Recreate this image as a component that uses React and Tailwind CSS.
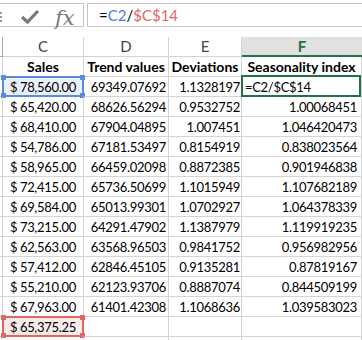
import React from "react";

const rows = [
  ["78,560.00", "69349.07692", "1.1328197", "=C2/$C$14"],
  ["65,420.00", "68626.56294", "0.9532752", "1.00068451"],
  ["68,410.00", "67904.04895", "1.007451", "1.046420473"],
  ["54,786.00", "67181.53497", "0.8154919", "0.838023564"],
  ["58,965.00", "66459.02098", "0.8872385", "0.901946838"],
  ["72,415.00", "65736.50699", "1.1015949", "1.107682189"],
  ["69,584.00", "65013.99301", "1.0702927", "1.064378339"],
  ["73,215.00", "64291.47902", "1.1387979", "1.119919235"],
  ["62,563.00", "63568.96503", "0.9841752", "0.956982956"],
  ["57,412.00", "62846.45105", "0.9135281", "0.87819167"],
  ["55,210.00", "62123.93706", "0.8887074", "0.844509199"],
  ["67,963.00", "61401.42308", "1.1068636", "1.039583023"],
];

const cell = "h-5 shrink-0 border-r border-b border-[#d4d4d4] relative";

const Handles = ({ color }) => (
  <>
    <span className={`absolute -left-[3px] -top-[3px] w-[5px] h-[5px] ${color}`} />
    <span className={`absolute -right-[3px] -top-[3px] w-[5px] h-[5px] ${color}`} />
    <span className={`absolute -left-[3px] -bottom-[3px] w-[5px] h-[5px] ${color}`} />
    <span className={`absolute -right-[3px] -bottom-[3px] w-[5px] h-[5px] ${color}`} />
  </>
);

const Money = ({ value }) => (
  <div className="flex justify-between items-center h-full pl-[7px] pr-[7px]">
    <span>$</span>
    <span>{value}</span>
  </div>
);

export default function App() {
  return (
    <div
      className="w-[362px] h-[340px] overflow-hidden bg-white text-black"
      style={{ fontFamily: "Lato, 'Liberation Sans', sans-serif" }}
    >
      {/* formula bar */}
      <div className="flex h-[37px] pt-[3px]">
        <div className="relative flex items-center h-[24px] w-[84px] shrink-0 border border-l-0 border-[#c6c6c6]">
          <span className="absolute left-0 top-[8px] flex flex-col gap-[2px]">
            <span className="w-[2px] h-[2px] bg-[#999]" />
            <span className="w-[2px] h-[2px] bg-[#999]" />
            <span className="w-[2px] h-[2px] bg-[#999]" />
          </span>
          <svg className="absolute left-[20px] top-[5px]" width="20" height="15" viewBox="0 0 20 15">
            <path d="M2 8 L7.5 13 L18 2" fill="none" stroke="#7a7a7a" strokeWidth="3.2" />
          </svg>
          <span
            className="absolute left-[55px] top-[-1px] text-[21px] italic text-[#7a7a7a]"
            style={{ fontFamily: "'DejaVu Serif', serif" }}
          >
            fx
          </span>
        </div>
        <div className="ml-[3px] flex items-center h-[24px] flex-1 border border-r-0 border-[#c6c6c6] pl-[11px] text-[15px]">
          <span>=</span>
          <span className="text-[#4a7fd6]">C2</span>
          <span>/</span>
          <span className="text-[#e46464]">$C$14</span>
        </div>
      </div>

      {/* column headers */}
      <div className="flex h-5 text-[15px] text-[#444]">
        <div className="w-[3px] shrink-0 border-r border-b border-[#ababab]" />
        <div className="w-[81px] shrink-0 flex items-center justify-center border-r border-b border-[#d4d4d4]">C</div>
        <div className="w-[85px] shrink-0 flex items-center justify-center border-r border-b border-[#d4d4d4]">D</div>
        <div className="w-[73px] shrink-0 flex items-center justify-center border-r border-b border-[#d4d4d4]">E</div>
        <div className="w-[120px] shrink-0 flex items-center justify-center bg-[#e1e1e1] border-b-2 border-[#217346] text-[#217346] font-bold">F</div>
      </div>

      {/* grid */}
      <div className="text-[13px] leading-5 tracking-[-0.3px]">
        <div className="flex font-bold text-[14px] tracking-normal">
          <div className={`${cell} w-[3px]`} />
          <div className={`${cell} w-[81px] text-center`}>Sales</div>
          <div className={`${cell} w-[85px] text-center`}>Trend values</div>
          <div className={`${cell} w-[73px] text-center`}>Deviations</div>
          <div className={`${cell} w-[120px] text-center whitespace-nowrap`}>Seasonality index</div>
        </div>

        {rows.map((r, i) => (
          <div key={i} className="flex">
            <div className={`${cell} w-[3px]`} />
            <div className={`${cell} w-[81px] ${i === 0 ? "bg-[#eaf1fb]" : ""}`}>
              <Money value={r[0]} />
              {i === 0 && (
                <div className="absolute -left-px -top-px -right-px -bottom-px border-2 border-[#5b8bd9]">
                  <Handles color="bg-[#5b8bd9]" />
                </div>
              )}
            </div>
            <div className={`${cell} w-[85px] text-right pr-[2px]`}>{r[1]}</div>
            <div className={`${cell} w-[73px] text-right pr-[1px] whitespace-nowrap`}>{r[2]}</div>
            <div className={`${cell} w-[120px] ${i === 0 ? "text-left pl-[3px]" : "text-right pr-[4px]"}`}>
              {r[3]}
              {i === 0 && (
                <div className="absolute -left-px -top-[2px] right-0 -bottom-px border-2 border-[#217346]" />
              )}
            </div>
          </div>
        ))}

        <div className="flex">
          <div className={`${cell} w-[3px]`} />
          <div className={`${cell} w-[81px] bg-[#fbeaea]`}>
            <Money value="65,375.25" />
            <div className="absolute -left-px -top-px -right-px -bottom-px border-2 border-[#e06666]">
              <Handles color="bg-[#e06666]" />
            </div>
          </div>
          <div className={`${cell} w-[85px]`} />
          <div className={`${cell} w-[73px]`} />
          <div className={`${cell} w-[120px]`} />
        </div>
        <div className="flex">
          <div className={`${cell} w-[3px]`} />
          <div className={`${cell} w-[81px]`} />
          <div className={`${cell} w-[85px]`} />
          <div className={`${cell} w-[73px]`} />
          <div className={`${cell} w-[120px]`} />
        </div>
      </div>
    </div>
  );
}
